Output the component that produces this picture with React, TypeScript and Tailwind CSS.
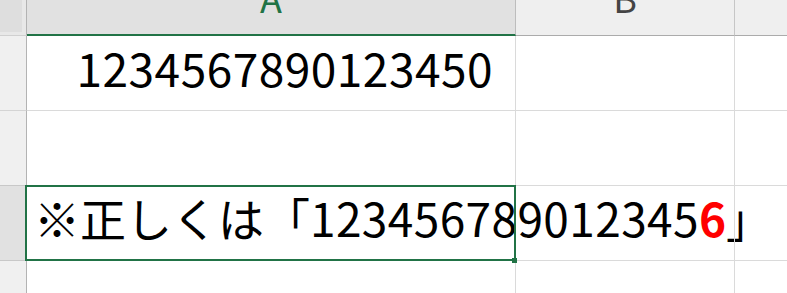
export default function App() {
  return (
    <div className="relative w-[787px] h-[293px] overflow-hidden bg-white font-['Noto_Sans_CJK_JP','Noto_Sans',sans-serif]">
      {/* header row */}
      <div className="flex h-[36px]">
        <div className="w-[27px] shrink-0 bg-[#e8e8e8] border-r border-r-[#b3b3b3] border-b border-b-[#d0d0d0]">
          <div className="w-[22px] h-[32px] bg-[#dedede]" />
        </div>
        <div className="w-[489px] shrink-0 bg-[#e1e1e1] border-r border-r-[#bdbdbd] border-b-2 border-b-[#217346] overflow-hidden flex justify-center">
          <span className="block text-[36px] leading-none text-[#217346] -mt-[21px]">A</span>
        </div>
        <div className="w-[219px] shrink-0 bg-[#efefef] border-r border-r-[#c6c6c6] border-b border-b-[#ababab] overflow-hidden flex justify-center">
          <span className="block text-[36px] leading-none text-[#444444] -mt-[21px]">B</span>
        </div>
        <div className="flex-1 bg-[#efefef] border-b border-b-[#ababab]" />
      </div>

      {/* row 1 */}
      <div className="flex h-[75px]">
        <div className="w-[27px] shrink-0 bg-[#f0f0f0] border-r border-r-[#b3b3b3] border-b border-b-[#d4d4d4]" />
        <div className="w-[489px] shrink-0 border-r border-b border-[#dadada] flex items-end justify-end pr-[22px] pb-[20px]">
          <span className="text-[46px] leading-none tracking-[0.5px] text-black whitespace-nowrap">1234567890123450</span>
        </div>
        <div className="w-[219px] shrink-0 border-r border-b border-[#dadada]" />
        <div className="flex-1 border-b border-[#dadada]" />
      </div>

      {/* row 2 */}
      <div className="flex h-[75px]">
        <div className="w-[27px] shrink-0 bg-[#f0f0f0] border-r border-r-[#b3b3b3] border-b border-b-[#c8c8c8]" />
        <div className="w-[489px] shrink-0 border-r border-b border-[#dadada]" />
        <div className="w-[219px] shrink-0 border-r border-b border-[#dadada]" />
        <div className="flex-1 border-b border-[#dadada]" />
      </div>

      {/* row 3 */}
      <div className="flex h-[75px]">
        <div className="w-[27px] shrink-0 bg-[#e1e1e1] border-r border-r-[#b3b3b3] border-b border-b-[#c8c8c8]" />
        <div className="w-[489px] shrink-0 border-r border-b border-[#dadada] flex items-end pl-[7px] pb-[20px] overflow-visible">
          <span className="text-[46px] leading-none text-black whitespace-nowrap">
            ※正しくは「<span className="tracking-[0.4px]">123456789012345</span><span className="font-bold text-[#ff0000]">6</span>」
          </span>
        </div>
        <div className="w-[219px] shrink-0 border-r border-b border-[#dadada]" />
        <div className="flex-1 border-b border-[#dadada]" />
      </div>

      {/* row 4 */}
      <div className="flex h-[40px]">
        <div className="w-[27px] shrink-0 bg-[#f0f0f0] border-r border-r-[#b3b3b3]" />
        <div className="w-[489px] shrink-0 border-r border-[#dadada]" />
        <div className="w-[219px] shrink-0 border-r border-[#dadada]" />
        <div className="flex-1" />
      </div>

      {/* selection */}
      <div className="absolute left-[25px] top-[185px] w-[491px] h-[76px] border-2 border-[#217346]" />
      <div className="absolute left-[512px] top-[258px] w-[5px] h-[5px] bg-[#217346]" />
    </div>
  );
}
